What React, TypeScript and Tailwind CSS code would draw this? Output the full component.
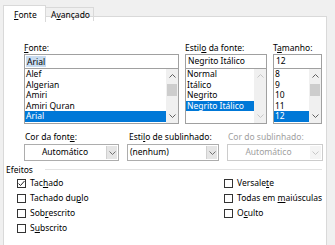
import React from 'react';

const FONT_NAMES = ['Alef', 'Algerian', 'Amiri', 'Amiri Quran', 'Arial'];
const STYLE_NAMES = ['Normal', 'Itálico', 'Negrito', 'Negrito Itálico'];
const SIZES = ['8', '9', '10', '11', '12'];

function Chevron({ up, color }: { up?: boolean; color: string }) {
    return (
        <svg width="7" height="4" viewBox="0 0 7 4" className="block">
            <path
                d={up ? 'M0.5 3.5L3.5 0.5L6.5 3.5' : 'M0.5 0.5L3.5 3.5L6.5 0.5'}
                fill="none"
                stroke={color}
                strokeWidth="1"
            />
        </svg>
    );
}

function ScrollBar({ disabled }: { disabled?: boolean }) {
    const c = disabled ? '#c6c6c6' : '#606060';
    return (
        <div className="w-[12px] shrink-0 bg-[#f0f0f0] flex flex-col">
            <div className="h-[14px] flex items-center justify-center">
                <Chevron up color={c} />
            </div>
            <div className="flex-1 px-px pt-px">
                {!disabled && <div className="h-[12px] bg-[#cdcdcd]" />}
            </div>
            <div className="h-[14px] flex items-center justify-center">
                <Chevron color={c} />
            </div>
        </div>
    );
}

function ListBox({ items, selected, disabledScroll }: { items: string[]; selected: number; disabledScroll?: boolean }) {
    return (
        <div className="h-[55px] border border-t-0 border-[#a0a0a0] bg-white flex">
            <div className="flex-1 min-w-0">
                {items.map((t, i) => (
                    <div
                        key={t}
                        className={
                            i === selected
                                ? 'h-[10.5px] leading-[10.5px] pl-px bg-[#0078d7] text-white whitespace-nowrap'
                                : 'h-[10.5px] leading-[10.5px] pl-px whitespace-nowrap'
                        }
                    >
                        {t}
                    </div>
                ))}
            </div>
            <ScrollBar disabled={disabledScroll} />
        </div>
    );
}

function Acc({ children }: { children: React.ReactNode }) {
    return <span className="underline underline-offset-[1px]">{children}</span>;
}

function Combo({ text, center, disabled }: { text: string; center?: boolean; disabled?: boolean }) {
    return (
        <div className={disabled ? 'h-[17px] flex border border-[#cccccc] bg-white' : 'h-[17px] flex border border-[#adadad] bg-white'}>
            <div
                className={
                    (center ? 'justify-center ' : 'pl-[2px] ') +
                    (disabled ? 'text-[#a0a0a0] ' : 'text-black ') +
                    'flex-1 flex items-center leading-none'
                }
            >
                {text}
            </div>
            <div
                className={
                    disabled
                        ? 'w-[11px] m-px bg-[#f4f4f4] flex items-center justify-center'
                        : 'w-[11px] m-px bg-[#e5e5e5] border-l border-[#d0d0d0] flex items-center justify-center'
                }
            >
                <Chevron color={disabled ? '#c6c6c6' : '#707070'} />
            </div>
        </div>
    );
}

function Check({ label, checked }: { label: React.ReactNode; checked?: boolean }) {
    return (
        <div className="h-[15px] flex items-center gap-[4px]">
            <div className="w-[9px] h-[9px] border border-[#333333] bg-white flex items-center justify-center">
                {checked && (
                    <svg width="7" height="7" viewBox="0 0 7 7" className="block">
                        <path d="M0.5 3.5L2.5 5.5L6.5 1" fill="none" stroke="#222" strokeWidth="1" />
                    </svg>
                )}
            </div>
            <span className="leading-none whitespace-nowrap">{label}</span>
        </div>
    );
}

export default function App() {
    return (
        <div className="w-[335px] h-[245px] overflow-hidden bg-[#f0f0f0] text-black text-[8.5px] font-['Noto_Sans','Open_Sans',sans-serif]">
            {/* Tabs */}
            <div className="flex items-start pl-[3px] pt-[5px] h-[16px] relative z-10">
                <div className="w-[43px] h-[17px] bg-white border border-b-0 border-[#d9d9d9] pl-[10px] pt-[4px] leading-[9px]">
                    <Acc>F</Acc>onte
                </div>
                <div className="mt-[2px] w-[48px] h-[14px] border border-l-0 border-b-0 border-[#d9d9d9] pl-[5px] pt-[2px] leading-[9px]">
                    A<Acc>v</Acc>ançado
                </div>
            </div>

            {/* Page */}
            <div className="ml-[3px] w-[324px] h-[240px] border border-[#d9d9d9] bg-white">
                <div className="pl-[20px] pt-[25px] flex gap-[6px]">
                    <div className="w-[155px]">
                        <div className="h-[11px] leading-[11px] mb-px">
                            <Acc>F</Acc>onte:
                        </div>
                        <div className="h-[15px] border border-[#a0a0a0] flex items-center pl-px">
                            <span className="bg-[#c9dcf0] px-px leading-[11px]">Arial</span>
                        </div>
                        <ListBox items={FONT_NAMES} selected={4} />
                    </div>
                    <div className="w-[82px]">
                        <div className="h-[11px] leading-[11px] mb-px whitespace-nowrap">
                            Estil<Acc>o</Acc> da fonte:
                        </div>
                        <div className="h-[15px] border border-[#a0a0a0] flex items-center pl-[2px]">Negrito Itálico</div>
                        <ListBox items={STYLE_NAMES} selected={3} disabledScroll />
                    </div>
                    <div className="w-[49px]">
                        <div className="h-[11px] leading-[11px] mb-px">
                            T<Acc>a</Acc>manho:
                        </div>
                        <div className="h-[15px] border border-[#a0a0a0] flex items-center pl-[2px]">12</div>
                        <ListBox items={SIZES} selected={4} />
                    </div>
                </div>

                <div className="pl-[20px] mt-[7px] flex gap-[8px]">
                    <div className="w-[95px]">
                        <div className="h-[11px] leading-[11px] mb-[2px] pl-px">
                            Cor da font<Acc>e</Acc>:
                        </div>
                        <Combo text="Automático" center />
                    </div>
                    <div className="w-[92px]">
                        <div className="h-[11px] leading-[11px] mb-[2px] pl-[2px] whitespace-nowrap">
                            Esti<Acc>l</Acc>o de sublinhado:
                        </div>
                        <Combo text="(nenhum)" />
                    </div>
                    <div className="w-[96px]">
                        <div className="h-[11px] leading-[11px] mb-[2px] pl-px text-[#a0a0a0] whitespace-nowrap">
                            Cor do sublinhado:
                        </div>
                        <Combo text="Automático" center disabled />
                    </div>
                </div>

                {/* Efeitos */}
                <div className="mt-[3px] pl-[2px] pr-[4px] flex items-center gap-[12px] h-[11px]">
                    <span className="leading-[11px]">Efeitos</span>
                    <div className="flex-1 h-px bg-[#e3e3e3]" />
                </div>
                <div className="mt-px pl-[13px] flex">
                    <div className="w-[207px]">
                        <Check label={<>Tac<Acc>h</Acc>ado</>} checked />
                        <Check label={<>Tachado du<Acc>p</Acc>lo</>} />
                        <Check label={<>Sob<Acc>r</Acc>escrito</>} />
                        <Check label={<>S<Acc>u</Acc>bscrito</>} />
                    </div>
                    <div>
                        <Check label={<>Versale<Acc>t</Acc>e</>} />
                        <Check label={<>Todas em <Acc>m</Acc>aiúsculas</>} />
                        <Check label={<>O<Acc>c</Acc>ulto</>} />
                    </div>
                </div>
            </div>
        </div>
    );
}
